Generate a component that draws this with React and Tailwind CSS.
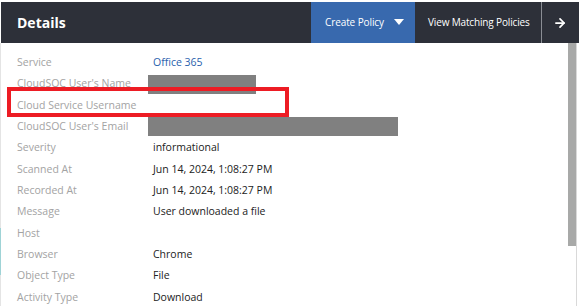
import { ArrowRight } from 'lucide-react';

const ROWS = [
  { label: 'Service', value: 'Office 365', link: true },
  { label: "CloudSOC User's Name", redact: 'w-[108px]' },
  { label: 'Cloud Service Username' },
  { label: "CloudSOC User's Email", redact: 'w-[250px]' },
  { label: 'Severity', value: 'informational' },
  { label: 'Scanned At', value: 'Jun 14, 2024, 1:08:27 PM' },
  { label: 'Recorded At', value: 'Jun 14, 2024, 1:08:27 PM' },
  { label: 'Message', value: 'User downloaded a file' },
  { label: 'Host' },
  { label: 'Browser', value: 'Chrome' },
  { label: 'Object Type', value: 'File' },
  { label: 'Activity Type', value: 'Download' },
];

export default function App() {
  return (
    <div
      className="relative h-[306px] w-[579px] overflow-hidden bg-white pt-[2px]"
      style={{ fontFamily: '"Open Sans", "Noto Sans", sans-serif' }}
    >
      <div className="ml-[1px] flex h-[41px] items-stretch whitespace-nowrap bg-[#2d3039] text-white">
        <div className="flex flex-1 items-center pl-4 text-[14px] font-bold">Details</div>
        <button
          type="button"
          className="flex w-[104px] shrink-0 items-center bg-[#3869ae] pl-[14px] text-[10px] tracking-[-0.1px]"
        >
          Create Policy
          <svg width="10" height="7" viewBox="0 0 10 7" className="ml-[10px]">
            <path d="M0 0 L10 0 L5 6 Z" fill="#fff" />
          </svg>
        </button>
        <div className="flex w-[126px] shrink-0 items-center pl-[13px] text-[10px] tracking-[-0.15px]">
          View Matching Policies
        </div>
        <div className="w-px shrink-0 bg-[#8a8d94]" />
        <div className="flex w-[37px] shrink-0 items-center justify-center pr-[2px]">
          <ArrowRight size={14} strokeWidth={3} />
        </div>
      </div>

      <div className="flex h-[263px]">
        <div className="relative w-px bg-[#e4e4e4]">
          <div className="absolute left-0 top-[185px] h-[47px] w-px bg-[#9fd3d6]" />
        </div>
        <div className="flex-1 pt-[9px] text-[10.5px]">
          {ROWS.map((row) => (
            <div key={row.label} className="flex h-[21.36px] items-center">
              <div className="w-[152px] pl-4 text-[#a3a3a3]">{row.label}</div>
              {row.redact ? (
                <div className={`-ml-[5px] h-[19px] bg-[#808080] ${row.redact}`} />
              ) : (
                <div className={row.link ? 'text-[#2a5fad]' : 'text-[#222]'}>{row.value}</div>
              )}
            </div>
          ))}
        </div>
        <div className="w-[8px]">
          <div className="h-[203px] bg-[#a8a9a8]" />
        </div>
        <div className="w-px bg-[#d9d9d9]" />
        <div className="w-[2px]" />
      </div>

      <div className="absolute left-[7px] top-[87px] h-[30px] w-[282px] border-4 border-[#ed1c24]" />
    </div>
  );
}
